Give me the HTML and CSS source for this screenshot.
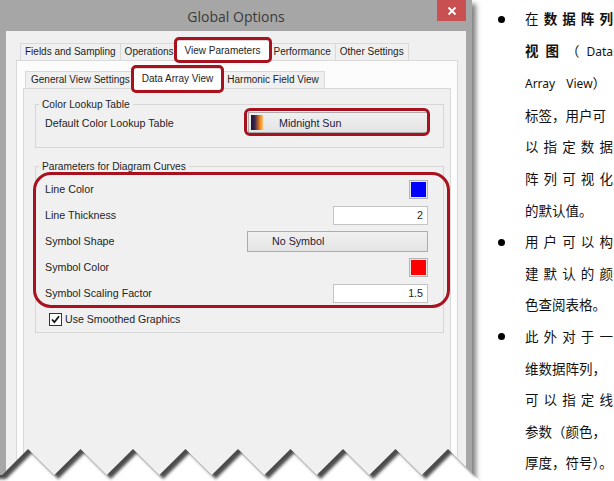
FILE: index.html
```html
<!DOCTYPE html>
<html lang="zh">
<head>
<meta charset="utf-8">
<title>Global Options</title>
<link rel="stylesheet" href="styles.css">
</head>
<body>
<div class="page">
  <div class="window">
    <div class="titlebar">
      <span class="title">Global Options</span>
      <span class="close"><svg width="10" height="10" viewBox="0 0 10 10"><path d="M1.5 1.5 L8.5 8.5 M8.5 1.5 L1.5 8.5" stroke="#fff" stroke-width="1.8" fill="none"/></svg></span>
    </div>
    <div class="client">
      <div class="tabs">
        <div class="tabstrip outer">
          <div class="tab">Fields and Sampling</div>
          <div class="tab">Operations</div>
          <div class="tab active mark mark-tab">View Parameters</div>
          <div class="tab">Performance</div>
          <div class="tab">Other Settings</div>
        </div>
        <div class="panel">
          <div class="tabstrip inner">
            <div class="tab">General View Settings</div>
            <div class="tab active mark mark-itab">Data Array View</div>
            <div class="tab">Harmonic Field View</div>
          </div>
          <div class="inner-panel">
            <fieldset class="group g1">
              <legend>Color Lookup Table</legend>
              <div class="row row-lut">
                <span class="label">Default Color Lookup Table</span>
                <button class="btn lut mark mark-btn" type="button"><i class="lut-swatch"></i><span>Midnight Sun</span></button>
              </div>
            </fieldset>
            <fieldset class="group g2">
              <legend>Parameters for Diagram Curves</legend>
              <div class="params mark mark-big">
                <div class="row">
                  <span class="label">Line Color</span>
                  <span class="swatch"><i class="blue"></i></span>
                </div>
                <div class="row">
                  <span class="label">Line Thickness</span>
                  <span class="field">2</span>
                </div>
                <div class="row">
                  <span class="label">Symbol Shape</span>
                  <button class="btn shape" type="button">No Symbol</button>
                </div>
                <div class="row">
                  <span class="label">Symbol Color</span>
                  <span class="swatch"><i class="red"></i></span>
                </div>
                <div class="row">
                  <span class="label">Symbol Scaling Factor</span>
                  <span class="field">1.5</span>
                </div>
              </div>
              <div class="check-row">
                <span class="checkbox"><svg width="11" height="11" viewBox="0 0 11 11"><path d="M2 5.5 L4.4 8.2 L9 2.3" stroke="#111" stroke-width="1.8" fill="none"/></svg></span>
                <span class="check-label">Use Smoothed Graphics</span>
              </div>
            </fieldset>
          </div>
        </div>
      </div>
    </div>
    <svg class="torn" width="490" height="51" viewBox="0 0 490 51">
      <defs>
        <clipPath id="below">
          <path d="M-10,35 L2,35 L28,9 L54.25,35 L80.5,9 L106.75,35 L133,9 L159.25,35 L185.5,9 L211.75,35 L238,9 L264.25,35 L290.5,9 L316.75,35 L343,9 L369.25,35 L395.5,9 L421.75,35 L448,9 L490,51 L-10,51 Z"/>
        </clipPath>
        <filter id="blur" x="-10%" y="-50%" width="120%" height="200%">
          <feGaussianBlur stdDeviation="1.6"/>
        </filter>
      </defs>
      <path fill="#fff" d="M-10,35 L2,35 L28,9 L54.25,35 L80.5,9 L106.75,35 L133,9 L159.25,35 L185.5,9 L211.75,35 L238,9 L264.25,35 L290.5,9 L316.75,35 L343,9 L369.25,35 L395.5,9 L421.75,35 L448,9 L490,51 L-10,51 Z"/>
      <g clip-path="url(#below)">
        <path fill="#383838" fill-opacity="0.9" filter="url(#blur)" transform="translate(4,4)" d="M-10,-30 L472,-30 L472,33 L448,9 L421.75,35 L395.5,9 L369.25,35 L343,9 L316.75,35 L290.5,9 L264.25,35 L238,9 L211.75,35 L185.5,9 L159.25,35 L133,9 L106.75,35 L80.5,9 L54.25,35 L28,9 L2,35 L-10,35 Z"/>
      </g>
    </svg>
  </div>
  <ul class="notes">
    <li>
      <div class="txt">
        <span class="ln j">在<b>数据阵列</b></span>
        <span class="ln j"><b>视图</b>（<span class="lat">Data</span></span>
        <span class="ln ws"><span class="lat">Array View</span>）</span>
        <span class="ln">标签，用户可</span>
        <span class="ln j">以指定数据</span>
        <span class="ln j">阵列可视化</span>
        <span class="ln">的默认值。</span>
      </div>
    </li>
    <li>
      <div class="txt">
        <span class="ln j">用户可以构</span>
        <span class="ln j">建默认的颜</span>
        <span class="ln">色查阅表格。</span>
      </div>
    </li>
    <li>
      <div class="txt">
        <span class="ln j">此外对于一</span>
        <span class="ln">维数据阵列，</span>
        <span class="ln j">可以指定线</span>
        <span class="ln">参数（颜色，</span>
        <span class="ln">厚度，符号）。</span>
      </div>
    </li>
  </ul>
</div>
</body>
</html>
```

FILE: styles.css
```css
* { box-sizing: border-box; }
html, body { margin: 0; padding: 0; }
body {
  width: 614px;
  height: 481px;
  overflow: hidden;
  background: #fff;
  font-family: "Liberation Sans", Arial, sans-serif;
  font-size: 10.7px;
  color: #1e1e1e;
}
.page { display: flex; height: 481px; }

/* window */
.window {
  position: relative;
  flex: none;
  width: 472px;
  height: 481px;
  background: #a6a6a6;
  box-shadow: 4px 4px 5px rgba(0,0,0,0.5);
  display: flex;
  flex-direction: column;
  padding: 0 6px;
}
.titlebar {
  height: 31px;
  margin: 0 -6px;
  display: grid;
  grid-template-columns: 1fr auto 1fr;
  align-items: center;
}
.title {
  grid-column: 2;
  font-family: "Open Sans", sans-serif;
  font-size: 14px;
  color: #3a3a3a;
  padding-top: 1px;
}
.close {
  grid-column: 3;
  justify-self: end;
  align-self: start;
  margin-right: 6px;
  width: 29px;
  height: 21px;
  background: #c85050;
  display: flex;
  align-items: center;
  justify-content: center;
}
.close svg { display: block; }

.client {
  flex: 1;
  background: #f0f0f0;
  padding: 9px 0 0 10px;
  display: flex;
  flex-direction: column;
}
.tabs { flex: 1; display: flex; flex-direction: column; width: 442px; }

/* tabs */
.tabstrip {
  display: flex;
  align-items: flex-end;
  height: 20px;
  padding-left: 4px;
  position: relative;
  z-index: 2;
}
.tabstrip.inner { padding-left: 2px; }
.tab {
  height: 17px;
  line-height: 16px;
  padding: 0 4px;
  border: 1px solid #d9d9d9;
  border-bottom: 0;
  background: #f0f0f0;
  margin-right: -1px;
  white-space: nowrap;
  color: #1e1e1e;
  font-size: 10px;
}
.tabstrip.inner .tab { padding: 0 5px; }
.tab.active,
.tabstrip.inner .tab.active {
  height: 21px;
  line-height: 19px;
  margin: 0 -1px -1px -2px;
  padding: 0 8px;
  background: #fff;
  position: relative;
  z-index: 3;
}
.panel {
  flex: 1;
  border: 1px solid #d9d9d9;
  border-bottom: 0;
  background: #fcfcfc;
  padding: 7px 6px 0 6px;
  display: flex;
  flex-direction: column;
}
.inner-panel {
  flex: 1;
  border: 1px solid #d9d9d9;
  border-bottom: 0;
  background: #f0f0f0;
  padding: 9px 6px 0 11px;
}

/* groups */
.group {
  margin: 0;
  min-width: 0;
  border: 1px solid #d6d6d6;
  padding: 0;
}
.group legend {
  padding: 0 3px;
  margin-left: 3px;
  line-height: 13px;
  color: #1e1e1e;
  font-size: 10.2px;
}
.g1 { padding: 1px 0 14px 0; }
.g2 { margin-top: 12px; padding: 3px 0 0 0; }
.row {
  display: flex;
  align-items: center;
  height: 26px;
  padding: 0 15px 0 9px;
}
.row-lut { height: 21px; }
.label { flex: 1; white-space: nowrap; }

.btn {
  font: inherit;
  height: 21px;
  border: 1px solid #acacac;
  background: linear-gradient(#f0f0f0, #e4e4e4);
  color: #1c1c3a;
  text-align: left;
  display: flex;
  align-items: center;
  margin: 0;
}
.btn.lut { width: 180px; padding: 0 0 0 2px; }
.lut-swatch {
  display: block;
  width: 12px;
  height: 15px;
  background: linear-gradient(90deg, #15163a 0%, #3a2448 30%, #b8602a 60%, #f5962a 80%, #fcc070 100%);
  margin-right: 16px;
}
.btn.shape { width: 181px; padding: 0 0 0 24px; }

.swatch {
  width: 19px;
  height: 19px;
  border: 1px solid #b4b4b4;
  background: #e8e8e8;
  padding: 1px;
}
.swatch i { display: block; width: 100%; height: 100%; }
.swatch .blue { background: #0000ff; }
.swatch .red { background: #ff0000; }

.field {
  width: 95px;
  height: 19px;
  background: #fff;
  border: 1px solid #c4c4c4;
  text-align: right;
  padding-right: 4px;
  line-height: 17px;
}

.check-row {
  display: flex;
  align-items: center;
  height: 26px;
  padding-left: 13px;
}
.checkbox {
  width: 13px;
  height: 13px;
  border: 1px solid #333;
  background: #fff;
  display: flex;
  align-items: center;
  justify-content: center;
  margin-right: 3px;
}
.checkbox svg { display: block; }
.check-label { font-size: 10.6px; }

/* red annotation marks (overlays) */
.mark { position: relative; }
.mark::after {
  content: "";
  position: absolute;
  border: 3px solid #a8121f;
  border-radius: 5px;
  pointer-events: none;
}
.mark-tab::after { top: -4px; bottom: -2px; left: -3px; right: -3px; }
.mark-itab::after { top: -4px; bottom: -4px; left: -3px; right: -3px; }
.mark-btn::after { top: -5px; bottom: -4px; left: -5px; right: -3px; border-radius: 6px; }
.mark-big::after { top: -4px; bottom: -2px; left: -3px; right: -7px; border-radius: 18px; }

/* torn edge */
.torn {
  position: absolute;
  left: 0;
  top: 440px;
  z-index: 5;
  overflow: visible;
}

/* notes */
.notes {
  list-style: none;
  margin: 0 0 0 8px;
  padding: 3px 0 0 0;
  font-family: "Noto Sans CJK SC", sans-serif;
  font-size: 13.5px;
  line-height: 31.6px;
  color: #111;
  flex: none;
}
.notes li { display: flex; }
.notes li::before {
  content: "";
  flex: none;
  width: 7px;
  height: 7px;
  border-radius: 50%;
  background: #000;
  margin: 12.5px 20px 0 18px;
}
.txt { width: 88px; }
.ln { display: block; white-space: nowrap; }
.ln.j { white-space: normal; text-align: justify; text-align-last: justify; }
.ln.ws .lat { word-spacing: 8px; }
.lat { font-family: "Noto Sans", sans-serif; font-size: 12px; }
.notes b { font-weight: 700; }
```
